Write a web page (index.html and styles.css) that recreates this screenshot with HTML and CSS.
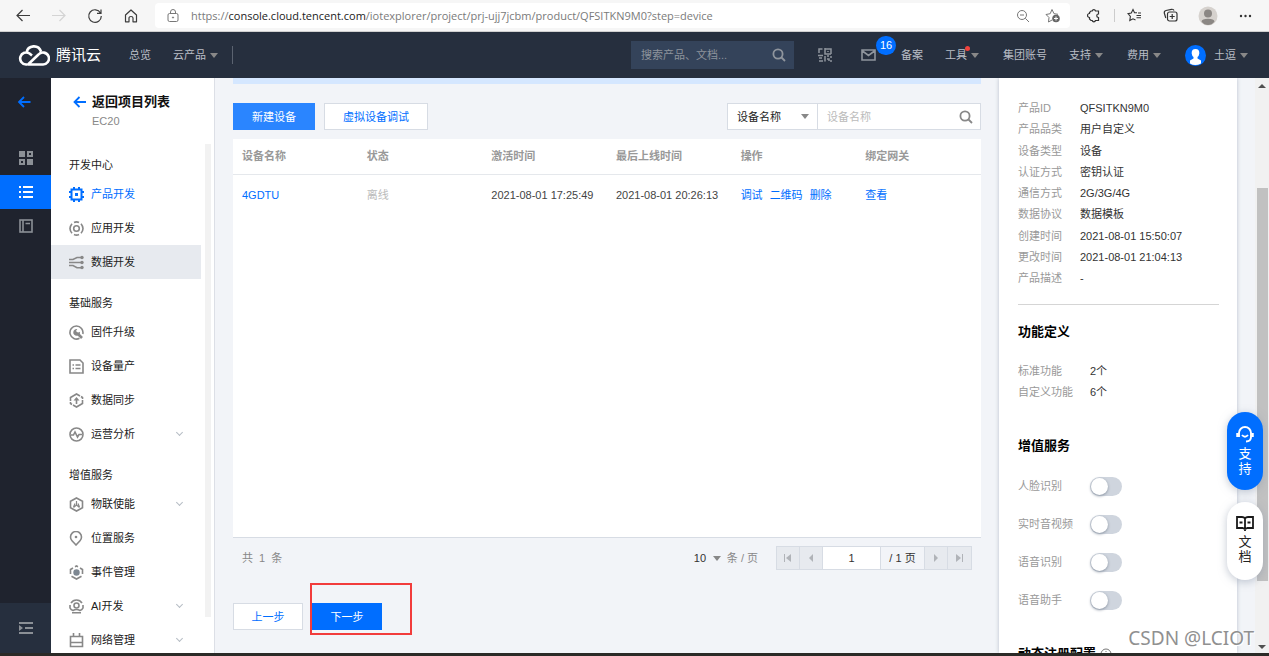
FILE: index.html
```html
<!DOCTYPE html>
<html lang="zh-CN">
<head>
<meta charset="utf-8">
<title>物联网开发平台</title>
<link rel="stylesheet" href="styles.css">
</head>
<body>
<div class="browser">
  <button class="bicon" aria-label="后退"><svg width="16" height="16" viewBox="0 0 16 16" fill="none" stroke="#3c3c3c" stroke-width="1.2"><path d="M15 7.500H2M7.500 2L2 7.500L7.500 13"/></svg></button>
  <button class="bicon" aria-label="前进"><svg width="16" height="16" viewBox="0 0 16 16" fill="none" stroke="#d4d4d4" stroke-width="1.2"><path d="M1 7.500H14M8.500 2L14 7.500L8.500 13"/></svg></button>
  <button class="bicon" aria-label="刷新"><svg width="16" height="16" viewBox="0 0 16 16" fill="none" stroke="#3c3c3c" stroke-width="1.2"><path d="M13.500 5A6.300 6.300 0 1 0 14.300 8M14 1.500V5.300H10"/></svg></button>
  <button class="bicon" aria-label="主页"><svg width="16" height="16" viewBox="0 0 16 16" fill="none" stroke="#3c3c3c" stroke-width="1.2" stroke-linejoin="round"><path d="M2.500 7L8 2L13.500 7V13.800H10V10Q10 8.500 8 8.500T6 10V13.800H2.500Z"/></svg></button>
  <div class="address">
    <svg width="12" height="14" viewBox="0 0 12 14" fill="none" stroke="#777"><rect x="1" y="4.500" width="10" height="8" rx="1.500"/><path d="M3.500 4.500V3A2.500 2.500 0 0 1 8.500 3V4.500"/><circle cx="6" cy="8.500" r=".6" fill="#777"/></svg>
    <span class="url">https://<b>console.cloud.tencent.com</b>/iotexplorer/project/prj-ujj7jcbm/product/QFSITKN9M0?step=device</span>
    <button class="bicon" aria-label="缩放"><svg width="14" height="14" viewBox="0 0 14 14" fill="none" stroke="#777"><circle cx="6" cy="6" r="4.500"/><path d="M9.300 9.300L13 13M4 6H8"/></svg></button>
    <button class="bicon" aria-label="收藏"><svg width="16" height="15" viewBox="0 0 16 15" fill="none" stroke="#777"><path d="M7 12L3.500 14L4 9.500L1 6.500L5.200 5.700L7 1.500L9 5.700L13 6.300"/><circle cx="11" cy="10.500" r="3.800" fill="#666" stroke="none"/><path d="M9 10.500H13M11 8.500V12.500" stroke="#fff"/></svg></button>
  </div>
  <div class="btools">
    <button class="bicon" aria-label="扩展"><svg width="14" height="15" viewBox="0 0 14 15" fill="none" stroke="#333" stroke-width="1.200"><path d="M4 3H5.200A1.700 1.700 0 0 1 8.500 3H11.500V6A1.600 1.600 0 0 0 11.500 9.500V12.500H8.500A1.700 1.700 0 0 1 5.200 12.500H4L2.500 11V9.500A2 2 0 0 1 2.500 5.500V4.500Z"/></svg></button>
    <span class="bsep"></span>
    <button class="bicon" aria-label="收藏夹"><svg width="16" height="15" viewBox="0 0 16 15" fill="none" stroke="#333" stroke-width="1.100"><path d="M10 4.800H7.500L6 1.500L4.300 5L1 5.600L3.400 8.300L2.800 12.500L6 10.800L8.500 12M9.500 7.500H14M9.500 9.700H14M11 5H14"/></svg></button>
    <button class="bicon" aria-label="集锦"><svg width="15" height="15" viewBox="0 0 15 15" fill="none" stroke="#333" stroke-width="1.200"><rect x="4.500" y="4" width="9.500" height="9" rx="2"/><path d="M9.200 6V11M6.700 8.500H11.700M2.800 10L1.300 5Q1 3 3 2.500L8.500 1.300Q10.500 1 11 2.500"/></svg></button>
    <button class="bicon" aria-label="个人资料"><svg width="20" height="20" viewBox="0 0 20 20"><circle cx="10" cy="10" r="9.500" fill="#d6d2ce"/><circle cx="10" cy="7.500" r="4" fill="#8b8784"/><path d="M3.500 15.500Q4 12.700 10 12.700T16.500 15.500Q14 19 10 19T3.500 15.500" fill="#8b8784"/></svg></button>
    <button class="bicon" aria-label="更多"><svg width="14" height="4" viewBox="0 0 14 4" fill="#333"><circle cx="3" cy="2" r="1.200"/><circle cx="7.500" cy="2" r="1.200"/><circle cx="12" cy="2" r="1.200"/></svg></button>
  </div>
</div>

<header class="top">
  <a class="brand" href="#"><svg width="32" height="24" viewBox="0 0 32 24" fill="none" stroke="#fff" stroke-width="2.600" stroke-linejoin="round"><path d="M9 21.500H8A6 6 0 1 1 11.500 10.500L14 12.500M8.500 9.500A7.500 7.500 0 0 1 23 8.500M10 21.500L20.500 11.500A6 6 0 1 1 24.500 21.500Z"/></svg>腾讯云</a>
  <a class="nav first" href="#">总览</a>
  <a class="nav near" href="#">云产品<i class="caret"></i></a>
  <span class="tsep"></span>
  <div class="tsearch"><input aria-label="搜索" placeholder="搜索产品、文档..."><svg width="14" height="14" viewBox="0 0 14 14" fill="none" stroke="#8f959d" stroke-width="1.800"><circle cx="6" cy="6" r="4.600"/><path d="M9.500 9.500L13 13"/></svg></div>
  <button class="nav qr" aria-label="二维码"><svg width="14" height="14" viewBox="0 0 14 14" fill="none" stroke="#8f959d" stroke-width="1.500"><path d="M1 5V1H4.500M7 1H13V6M7 0V6H13M10 3V4M0 7.500H5M1 10H4M1 13H5M7 8V13.500M9 8H11M13 8V10M9 11H11V13M13 12V14"/></svg></button>
  <button class="mail" aria-label="消息"><svg width="15" height="12" viewBox="0 0 15 12" fill="none" stroke="#8f959d" stroke-width="1.600"><path d="M1 1H14V11H1ZM1.500 2L7.500 6.500L13.500 2"/></svg><span class="badge">16</span></button>
  <a class="nav record" href="#">备案</a>
  <a class="nav near tool" href="#">工具<i class="caret"></i></a>
  <a class="nav wide" href="#">集团账号</a>
  <a class="nav near" href="#">支持<i class="caret"></i></a>
  <a class="nav wide" href="#">费用<i class="caret"></i></a>
  <a class="nav wide user" href="#"><svg width="21" height="21" viewBox="0 0 21 21"><circle cx="10.500" cy="10.500" r="10.500" fill="#006eff"/><path d="M10.500 4C7.500 4 6.500 6 6.700 8.500Q7 11 8.500 12V13.500L5 15.500V18.500Q10 21.500 16 18.500V15.500L12.500 13.500V12Q14 11 14.300 8.500C14.500 6 13.500 4 10.500 4" fill="#fff"/></svg>土逗<i class="caret"></i></a>
</header>

<div class="shell">
  <nav class="rail" aria-label="产品">
    <button class="back" aria-label="返回"><svg width="14" height="12" viewBox="0 0 14 12" fill="none" stroke="#006eff" stroke-width="1.800"><path d="M13.500 6H2M7 1L2 6L7 11"/></svg></button>
    <button aria-label="概览"><svg width="14" height="14" viewBox="0 0 14 14" fill="#8b9096"><path d="M0 0H6V6H0ZM8 8H14V14H8Z"/><path d="M8 0H14V6H8ZM10 2V4H12V2ZM0 8H6V14H0ZM2 10V12H4V10Z" fill-rule="evenodd"/></svg></button>
    <button class="on" aria-label="项目列表"><svg width="14" height="12" viewBox="0 0 14 12" fill="#fff"><path d="M0 0H2V2H0ZM4 0H14V2H4ZM0 5H2V7H0ZM4 5H14V7H4ZM0 10H2V12H0ZM4 10H14V12H4Z"/></svg></button>
    <button aria-label="文档"><svg width="14" height="14" viewBox="0 0 14 14" fill="none" stroke="#8b9096" stroke-width="1.600"><rect x="1" y="1" width="12" height="12"/><path d="M4 1V13M6.500 4.500H11"/></svg></button>
    <button class="fold" aria-label="展开"><svg width="14" height="12" viewBox="0 0 14 12" fill="#8b9096"><path d="M0 0H14V2H0ZM6 5H14V7H6ZM0 10H14V12H0ZM0 3L4 6L0 9Z"/></svg></button>
  </nav>

  <aside class="side">
    <div class="sidehead">
      <a class="title" href="#"><svg width="13" height="12" viewBox="0 0 13 12" fill="none" stroke="#006eff" stroke-width="1.800"><path d="M13 6H1.500M6.500 1L1.500 6L6.500 11"/></svg>返回项目列表</a>
      <span class="sub">EC20</span>
    </div>
    <div class="sidemenu">
      <h2>开发中心</h2>
      <a class="item cur" href="#"><svg class="ic" viewBox="0 0 15 15"><path d="M2.500 2.500H12.500V12.500H2.500ZM5 0V2M10 0V2M5 13V15M10 13V15M0 5H2M0 10H2M13 5H15M13 10H15" stroke-width="2"/><path d="M6 6H9V9H6Z" fill="#006eff" stroke="none"/></svg>产品开发</a>
      <a class="item" href="#"><svg class="ic" viewBox="0 0 15 15"><circle cx="7.500" cy="7.500" r="2.800"/><path d="M5 1.500Q7.500 .3 10 1.500M5 13.500Q7.500 14.700 10 13.500M3 2.700Q-1 7.500 3 12.300M12 2.700Q16 7.500 12 12.300"/></svg>应用开发</a>
      <a class="item hov" href="#"><svg class="ic" viewBox="0 0 15 15"><path d="M0 4.500H4L8 2.500H13M0 7.500H13M0 10.500H4L8 12.700H13"/><g fill="#888" stroke="none"><circle cx="13" cy="2.500" r="1.700"/><circle cx="13" cy="7.500" r="1.700"/><circle cx="13" cy="12.500" r="1.700"/></g></svg>数据开发</a>
      <h2>基础服务</h2>
      <a class="item" href="#"><svg class="ic" viewBox="0 0 15 15"><path d="M10.500 13.300A6.500 6.500 0 1 1 13.800 9"/><path d="M8 8L13 13" stroke-width="2.600"/><path d="M8.300 4A3.400 3.400 0 1 0 11 6.700L9 8L7 6Z" fill="#888" stroke="none"/></svg>固件升级</a>
      <a class="item" href="#"><svg class="ic" viewBox="0 0 15 15"><path d="M1 1H11L14 4V14H1ZM3.500 6H5M6.500 6H11.500M3.500 9.500H5M6.500 9.500H11.500"/></svg>设备量产</a>
      <a class="item" href="#"><svg class="ic" viewBox="0 0 15 15"><path d="M1.500 8V4.500L7.500 1L11 3M13.500 7V10.500L7.500 14L4 12M1.500 9V10.500L3 11.500M12 3.500L13.500 4.500V6M7.500 11V6"/><path d="M4.500 7.500L7.500 4L10.500 7.500Z" fill="#888" stroke="none"/></svg>数据同步</a>
      <a class="item" href="#"><svg class="ic" viewBox="0 0 15 15"><circle cx="7.500" cy="7.500" r="6.500"/><path d="M2 8H4.500L6 5L8.500 10L10 7.500H13"/></svg>运营分析<i class="more"></i></a>
      <h2>增值服务</h2>
      <a class="item" href="#"><svg class="ic" viewBox="0 0 15 15"><path d="M7.500 1L13.500 4.300V10.700L7.500 14L1.500 10.700V4.300Z"/><path d="M7.500 4V8L4.500 10.500M7.500 8L10.500 10.500M6 6.500L4.500 10M9 6.500L10.500 10" stroke-width="1.200"/></svg>物联使能<i class="more"></i></a>
      <a class="item" href="#"><svg class="ic" viewBox="0 0 15 15"><path d="M7 14L3 9.800A5.500 5.500 0 1 1 11 9.800Z"/><circle cx="7" cy="6" r="1.300" fill="#888" stroke="none"/></svg>位置服务</a>
      <a class="item" href="#"><svg class="ic" viewBox="0 0 15 15"><path d="M1.500 9V4.500L4 3M6 1.700L7.500 1L9 1.700M11 3L13.500 4.500V9M12.500 11.200L7.500 14L2.500 11.200"/><circle cx="7.500" cy="7.500" r="3.200" fill="#7d8791" stroke="none"/></svg>事件管理</a>
      <a class="item" href="#"><svg class="ic" viewBox="0 0 15 15"><circle cx="7.500" cy="6.500" r="2.500"/><path d="M2 4A6.500 6.500 0 0 1 13 4M1 6V9Q2 11 4 11.500Q7.500 9.500 11 11.500Q13 11 14 9V6M3 13.800H12"/></svg>AI开发<i class="more"></i></a>
      <a class="item" href="#"><svg class="ic" viewBox="0 0 15 15"><path d="M1.500 3.500H13.500V13.500H1.500ZM4.500 0V3M10.500 0V3M1.500 9.500H13.500"/></svg>网络管理<i class="more"></i></a>
    </div>
    <span class="sidebar-track"></span>
  </aside>

  <main class="main">
    <div class="notice"></div>
    <div class="toolbar">
      <button class="btn solid">新建设备</button>
      <button class="btn">虚拟设备调试</button>
      <div class="filter">
        <label class="pick"><select aria-label="搜索字段"><option>设备名称</option></select><i class="caret"></i></label>
        <div class="find"><input aria-label="设备名称" placeholder="设备名称"><svg width="14" height="14" viewBox="0 0 14 14" fill="none" stroke="#888" stroke-width="1.800"><circle cx="6" cy="6" r="4.600"/><path d="M9.500 9.500L13 13"/></svg></div>
      </div>
    </div>
    <div class="card">
      <table>
        <thead><tr><th>设备名称</th><th>状态</th><th>激活时间</th><th>最后上线时间</th><th>操作</th><th>绑定网关</th></tr></thead>
        <tbody><tr><td><a href="#">4GDTU</a></td><td class="off">离线</td><td>2021-08-01 17:25:49</td><td>2021-08-01 20:26:13</td><td><span class="ops"><a href="#">调试</a><a href="#">二维码</a><a href="#">删除</a></span></td><td><a href="#">查看</a></td></tr></tbody>
      </table>
    </div>
    <div class="pager">
      <span class="total">共&nbsp; 1 &nbsp;条</span>
      <label class="size"><select aria-label="每页条数"><option>10</option></select><i class="caret"></i>条 / 页</label>
      <div class="pages">
        <button aria-label="首页"><svg width="8" height="8" viewBox="0 0 8 8" fill="#b0b3b8"><path d="M0 0H1V8H0ZM7 0V8L2 4Z"/></svg></button>
        <button aria-label="上一页"><svg width="8" height="8" viewBox="0 0 8 8" fill="#b0b3b8"><path d="M6 0V8L2 4Z"/></svg></button>
        <input aria-label="页码" value="1">
        <span>/ 1 页</span>
        <button aria-label="下一页"><svg width="8" height="8" viewBox="0 0 8 8" fill="#b0b3b8"><path d="M2 0V8L6 4Z"/></svg></button>
        <button aria-label="末页"><svg width="8" height="8" viewBox="0 0 8 8" fill="#b0b3b8"><path d="M6 0H7V8H6ZM0 0V8L5 4Z"/></svg></button>
      </div>
    </div>
    <div class="steps">
      <button class="btn step">上一步</button>
      <span class="marked"><button class="btn step next">下一步</button></span>
    </div>
  </main>

  <aside class="info">
    <dl class="facts">
      <dt>产品ID</dt><dd>QFSITKN9M0</dd>
      <dt>产品品类</dt><dd>用户自定义</dd>
      <dt>设备类型</dt><dd>设备</dd>
      <dt>认证方式</dt><dd>密钥认证</dd>
      <dt>通信方式</dt><dd>2G/3G/4G</dd>
      <dt>数据协议</dt><dd>数据模板</dd>
      <dt>创建时间</dt><dd>2021-08-01 15:50:07</dd>
      <dt>更改时间</dt><dd>2021-08-01 21:04:13</dd>
      <dt>产品描述</dt><dd>-</dd>
    </dl>
    <h3>功能定义</h3>
    <dl class="counts">
      <dt>标准功能</dt><dd>2个</dd>
      <dt>自定义功能</dt><dd>6个</dd>
    </dl>
    <h3>增值服务</h3>
    <div class="switches">
      <label><span>人脸识别</span><input type="checkbox"></label>
      <label><span>实时音视频</span><input type="checkbox"></label>
      <label><span>语音识别</span><input type="checkbox"></label>
      <label><span>语音助手</span><input type="checkbox"></label>
    </div>
    <h3>动态注册配置 <svg width="12" height="12" viewBox="0 0 12 12" fill="none" stroke="#777"><circle cx="6" cy="6" r="5"/><path d="M6 5V9M6 3V4"/></svg></h3>
  </aside>
  <div class="scroll"><i class="up"></i><span class="thumb"></span><i class="down"></i></div>
  <div class="float">
    <button class="help"><svg width="20" height="19" viewBox="0 0 20 19" fill="none" stroke="#fff" stroke-width="1.900"><path d="M4 12V8A6 6 0 0 1 16 8V12Q16 16.500 11 16.500"/><path d="M2.500 8V12M17.500 8V12" stroke-width="2.500"/><path d="M7 10Q10 13.500 13 10"/></svg>支<br>持</button>
    <button class="doc"><svg width="20" height="17" viewBox="0 0 20 17" fill="none" stroke="#1a1a1a" stroke-width="1.800"><path d="M10 14V3.500Q9 2 7 2H2V13H7.500L10 14L12.500 13H18V2H13Q11 2 10 3.500M10 13V16M4.500 7.500H7.500M12.500 7.500H15.500"/></svg>文<br>档</button>
  </div>
  <span class="mark">CSDN @LCIOT</span>
</div>
<div class="edge"></div>
</body>
</html>
```

FILE: styles.css
```css
*, *::before, *::after { box-sizing: border-box; }
body {
  margin: 0;
  height: 100vh;
  display: flex;
  flex-direction: column;
  overflow: hidden;
  background: #f2f4f8;
  color: #222;
  font: 11px/20px "Liberation Sans", "Noto Sans CJK SC", sans-serif;
}
button, input, select { font: inherit; color: inherit; margin: 0; padding: 0; border: 0; background: none; border-radius: 0; outline: 0; }
select { appearance: none; }
a { text-decoration: none; color: #006eff; }
svg { flex: none; display: block; }
h2, h3, dl, dd { margin: 0; }

.caret { flex: none; border: 4px solid transparent; border-top: 5px solid #888; border-bottom: 0; }

.browser { flex: none; height: 32px; display: flex; align-items: center; background: #f6f6f6; padding: 0 17px 0 15px; gap: 20px; border-bottom: 1px solid #d0d0d0; }
.bicon { flex: none; display: flex; align-items: center; justify-content: center; }
.address { flex: 1; min-width: 0; height: 25px; margin-left: -4px; padding: 0 9px 0 12px; display: flex; align-items: center; gap: 12px; background: #fff; border-radius: 4px; }
.address .bicon + .bicon { margin-left: 3px; }
.url { flex: 1; min-width: 0; white-space: nowrap; overflow: hidden; color: #7a7a7a; font-family: "Open Sans", sans-serif; font-size: 11px; }
.url b { font-weight: 400; color: #222; }
.btools { display: flex; align-items: center; gap: 20px; margin-left: -3px; }
.bsep { width: 1px; height: 13px; background: #ccc; margin: 0 -8px 0 -7px; }

.top { flex: none; height: 46px; display: flex; align-items: center; padding: 0 21px 0 18px; background: #262f3e; color: #b9bec6; }
.top a { color: inherit; white-space: nowrap; }
.top .brand { display: flex; align-items: center; gap: 6px; color: #fff; font-size: 15px; }
.nav { display: flex; align-items: center; gap: 4px; }
.nav.first { margin-left: 28px; }
.nav.near { margin-left: 22px; }
.nav.wide { margin-left: 24px; }
.user svg { margin-right: 4px; }
.tsep { width: 1px; height: 18px; margin-left: 14px; background: #5b6370; }
.tsearch { width: 163px; height: 28px; margin-left: auto; padding: 0 8px 0 10px; display: flex; align-items: center; background: #34435a; }
.tsearch input { flex: 1; min-width: 0; }
.tsearch input::placeholder { color: #8d939c; opacity: 1; }
.nav.qr { margin-left: 24px; }
.mail { position: relative; margin: 0 25px 0 29px; }
.badge { position: absolute; left: 15px; top: -13px; width: 20px; height: 19px; border-radius: 10px; background: #006eff; color: #fff; line-height: 19px; text-align: center; }
.tool { position: relative; }
.tool::after { content: ""; position: absolute; left: 20px; top: 1px; width: 5px; height: 5px; border-radius: 50%; background: #f0423c; }

.shell { flex: 1; min-height: 0; display: flex; position: relative; overflow: hidden; }
.rail { flex: none; width: 51px; display: flex; flex-direction: column; background: #1f232e; }
.rail button { height: 34px; flex: none; display: flex; align-items: center; justify-content: center; }
.rail .back { height: 48px; margin-bottom: 15px; padding-right: 3px; }
.rail .on { background: #006eff; }
.rail .fold { height: 50px; margin-top: auto; background: #262f3e; }

.side { flex: none; width: 164px; position: relative; background: #fff; border-right: 1px solid #dcdfe6; }
.sidehead { height: 74px; padding: 14px 0 0 22px; }
.title { display: flex; align-items: center; gap: 6px; font-size: 13px; font-weight: 700; }
.side .title { color: #111; }
.sub { display: block; padding-left: 19px; line-height: 18px; color: #888; }
.sidemenu h2 { padding: 12px 18px 0; font-size: 11px; line-height: 24px; font-weight: 400; }
.sidemenu h2:first-child { padding-top: 1px; }
.item { height: 34px; width: 150px; display: flex; align-items: center; gap: 7px; padding: 0 18px; color: #222; }
.ic { width: 15px; height: 15px; fill: none; stroke: #888; stroke-width: 1.6; }
.item.cur { color: #006eff; }
.item.cur .ic { stroke: #006eff; }
.item.hov { background: #e7eaef; }
.more { width: 5px; height: 5px; margin: 0 1px 4px auto; border: solid #b5bcc4; border-width: 0 1px 1px 0; transform: rotate(45deg); }
.sidebar-track { position: absolute; right: 3px; top: 66px; bottom: 36px; width: 6px; background: #f2f2f2; }

.main { flex: 1; min-width: 0; padding: 0 18px; display: flex; flex-direction: column; }
.notice { height: 6px; flex: none; background: #d5e7ff; }
.toolbar { display: flex; gap: 9px; margin: 19px 0 9px; }
.btn { height: 27px; padding: 0 18px; background: #fff; border: 1px solid #d7dce4; color: #006eff; white-space: nowrap; }
.btn.solid { background: #2a85ff; border-color: #2a85ff; color: #fff; }
.filter { margin-left: auto; display: flex; width: 254px; height: 27px; border: 1px solid #d7dce4; background: #fff; }
.pick { width: 90px; padding: 0 8px 0 9px; display: flex; align-items: center; justify-content: space-between; border-right: 1px solid #d7dce4; }
.find { flex: 1; min-width: 0; padding: 0 7px 0 9px; display: flex; align-items: center; }
.find input { flex: 1; min-width: 0; }
.find input::placeholder { color: #bbb; opacity: 1; }

.card { flex: 1; min-height: 0; background: #fff; border-bottom: 1px solid #d7dce4; }
table { width: 100%; table-layout: fixed; border-collapse: collapse; }
th, td { padding: 0 0 0 9px; text-align: left; white-space: nowrap; }
th { height: 35px; font-weight: 700; color: #999; border-bottom: 1px solid #e5e8ec; }
td { height: 42px; color: #444; }
td.off { color: #bbb; }
.ops { display: flex; gap: 7px; }

.pager { flex: none; display: flex; align-items: center; padding: 8px 9px 0; color: #888; }
.size { margin-left: auto; display: flex; align-items: center; gap: 6px; }
.size select { color: #333; }
.pages { display: flex; height: 24px; margin-left: 18px; border: 1px solid #d7dce4; color: #333; }
.pages > * { border-right: 1px solid #d7dce4; }
.pages > :last-child { border-right: 0; }
.pages button { width: 23px; background: #e7eaef; display: flex; align-items: center; justify-content: center; }
.pages input { width: 58px; background: #fff; text-align: center; }
.pages span { width: 44px; text-align: center; line-height: 22px; }

.steps { flex: none; display: flex; gap: 9px; padding: 33px 0 23px; }
.step { width: 70px; padding: 0; }
.next { background: #006eff; border-color: #006eff; color: #fff; }
.marked { position: relative; }
.marked::after { content: ""; position: absolute; left: -2px; top: -20px; width: 102px; height: 52px; border: 2px solid #f23c3c; }

.info { flex: none; width: 238px; padding: 20px 18px 0 19px; background: #fff; box-shadow: 0 0 4px #b9c0cc; overflow: hidden; }
.facts { min-height: 207px; padding-bottom: 15px; border-bottom: 1px solid #d5d5d5; display: grid; grid-template-columns: 62px 1fr; align-content: space-between; line-height: 21px; }
dt { color: #999; }
dd { color: #333; }
h3 { display: flex; align-items: center; gap: 4px; font-size: 13px; line-height: 22px; font-weight: 700; color: #000; margin: 16px 0 18px; }
.counts { display: grid; grid-template-columns: 72px 1fr; line-height: 21px; margin-bottom: 32px; }
.switches label { height: 38px; display: flex; align-items: center; color: #999; }
.switches span { width: 72px; }
.switches { margin: -8px 0 24px; }
.switches input { appearance: none; width: 32px; height: 19px; border-radius: 10px; background: #cfd5de; display: flex; align-items: center; padding: 1px; }
.switches input::before { content: ""; width: 17px; height: 17px; border-radius: 50%; background: #fff; box-shadow: 0 1px 3px #8892a0; }

.scroll { flex: none; width: 14px; margin-left: 18px; background: #f1f1f1; display: flex; flex-direction: column; align-items: center; padding: 6px 0 4px; }
.thumb { width: 11px; height: 393px; margin: 100px 0 auto; background: #c1c1c1; }
.up { border: 4px solid transparent; border-bottom-color: #505050; border-top: 0; }
.down { border: 4px solid transparent; border-top-color: #505050; border-bottom: 0; }
.float { position: absolute; right: 6px; top: 334px; display: flex; flex-direction: column; gap: 12px; }
.float button { width: 36px; height: 78px; display: flex; flex-direction: column; align-items: center; border-radius: 18px; padding-top: 13px; font-size: 13px; line-height: 15px; text-align: center; box-shadow: 0 2px 8px #8c98aa88; background: #fff; color: #222; }
.float svg { margin-bottom: 2px; }
.float .help { background: #006eff; color: #fff; }
.mark { position: absolute; right: 15px; bottom: 2px; font: 19px/26px "Noto Sans", sans-serif; color: #909090; text-shadow: 1px 1px 0 #fff; }
.edge { flex: none; height: 3px; background: #2b2a27; }
```
